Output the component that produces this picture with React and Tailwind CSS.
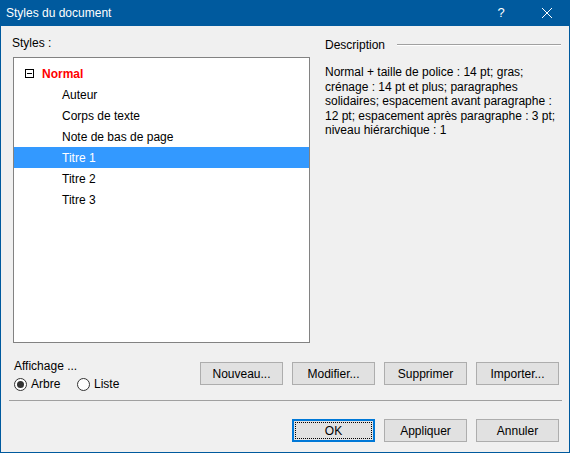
import { useState } from 'react';

const styleItems = ['Auteur', 'Corps de texte', 'Note de bas de page', 'Titre 1', 'Titre 2', 'Titre 3'];

const descLines = [
  'Normal + taille de police : 14 pt; gras;',
  'crénage : 14 pt et plus; paragraphes',
  'solidaires; espacement avant paragraphe :',
  '12 pt; espacement après paragraphe : 3 pt;',
  'niveau hiérarchique : 1',
];

const Button = ({ children, focused }) => (
  <button
    className={`relative w-[83px] h-[23px] bg-[#e1e1e1] text-[12px] text-black ${
      focused ? 'border-2 border-[#0078d7]' : 'border border-[#adadad]'
    }`}
  >
    {focused && <span className="absolute inset-[1px] border border-dotted border-black" />}
    <span className="relative">{children}</span>
  </button>
);

const Radio = ({ checked, label, onClick }) => (
  <label className="flex items-center gap-[4px] cursor-default" onClick={onClick}>
    <span className="flex items-center justify-center w-[13px] h-[13px] rounded-full border border-[#333] bg-white">
      {checked && <span className="w-[7px] h-[7px] rounded-full bg-[#333]" />}
    </span>
    <span>{label}</span>
  </label>
);

const App = () => {
  const [selected, setSelected] = useState('Titre 1');
  const [view, setView] = useState('arbre');

  return (
    <div className="w-[570px] h-[453px] bg-[#f0f0f0] border-x border-b border-[#005a9e] flex flex-col font-['Liberation_Sans',Arial,sans-serif] text-[12px] leading-[16px] text-black select-none">
      {/* title bar */}
      <div className="h-[26px] -mx-px bg-[#005a9e] text-white flex items-center justify-between">
        <span className="pl-[6px] text-[12px]">Styles du document</span>
        <div className="flex h-full">
          <div className="w-[46px] flex items-center justify-center text-[13px]">?</div>
          <div className="w-[46px] flex items-center justify-center">
            <svg width="10" height="10" viewBox="0 0 10 10">
              <path d="M0 0L10 10M10 0L0 10" stroke="white" strokeWidth="1" />
            </svg>
          </div>
        </div>
      </div>

      <div className="flex flex-col pl-[11px] pr-[10px] pt-[9px]">
        <div className="flex">
          {/* styles list */}
          <div className="flex flex-col">
            <div>Styles :</div>
            <div className="ml-px mt-[6px] w-[297px] h-[286px] bg-white border border-[#828282] pt-[5px]">
              <div className="h-[21px] flex items-center">
                <span className="ml-[11px] w-[9px] h-[9px] border border-black flex items-center justify-center">
                  <span className="w-[5px] h-px bg-black" />
                </span>
                <span className="ml-[8px] font-bold text-[#f00]">Normal</span>
              </div>
              {styleItems.map((item) => (
                <div
                  key={item}
                  onClick={() => setSelected(item)}
                  className={`h-[21px] flex items-center pl-[48px] ${
                    selected === item ? 'bg-[#3399ff] text-white' : ''
                  }`}
                >
                  {item}
                </div>
              ))}
            </div>
          </div>

          {/* description */}
          <div className="ml-[15px] flex-1 flex flex-col pt-[2px] -mr-[2px]">
            <div className="flex items-center">
              <span>Description</span>
              <span className="ml-[12px] flex-1 border-t border-[#a0a0a0] border-b border-b-white" />
            </div>
            <div className="mt-[12px] leading-[14.5px]">
              {descLines.map((line) => (
                <div key={line} className="whitespace-nowrap">{line}</div>
              ))}
            </div>
          </div>
        </div>

        {/* affichage + actions */}
        <div className="flex justify-between items-start mt-[15px]">
          <div className="ml-[2px] flex flex-col">
            <div>Affichage ...</div>
            <div className="mt-[2px] flex">
              <div className="w-[63px]">
                <Radio checked={view === 'arbre'} label="Arbre" onClick={() => setView('arbre')} />
              </div>
              <Radio checked={view === 'liste'} label="Liste" onClick={() => setView('liste')} />
            </div>
          </div>
          <div className="mt-[4px] flex gap-[9px]">
            <Button>Nouveau...</Button>
            <Button>Modifier...</Button>
            <Button>Supprimer</Button>
            <Button>Importer...</Button>
          </div>
        </div>

        <div className="mt-[8px] -ml-[3px] -mr-[3px] border-t border-[#a0a0a0]" />

        <div className="mt-[18px] flex justify-end gap-[9px]">
          <Button focused>OK</Button>
          <Button>Appliquer</Button>
          <Button>Annuler</Button>
        </div>
      </div>
    </div>
  );
};

export default App;
